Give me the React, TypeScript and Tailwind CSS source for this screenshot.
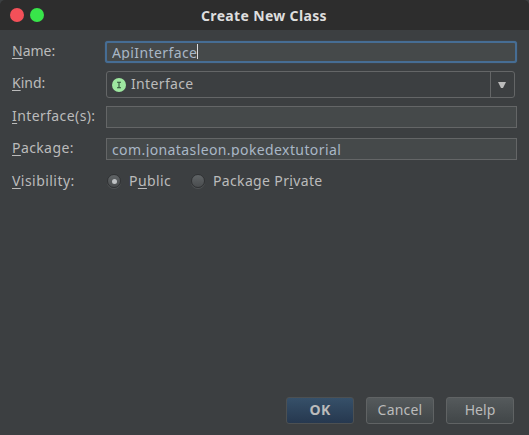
import type { ReactNode } from 'react';

function Key({ children }: { children: ReactNode }) {
  return <span className="underline decoration-1 underline-offset-2">{children}</span>;
}

function Row({ label, className, children }: { label: ReactNode; className: string; children: ReactNode }) {
  return (
    <div className={`flex ${className}`}>
      <div className="w-[94px] shrink-0 whitespace-nowrap leading-5">{label}</div>
      {children}
    </div>
  );
}

function Radio({ checked }: { checked?: boolean }) {
  return (
    <span className="flex size-[14px] items-center justify-center rounded-full border border-[#303234] bg-linear-to-b from-[#606466] to-[#4a4d4f] shadow-[0_1px_0_#505355]">
      {checked && <span className="size-[5px] rounded-full bg-[#bfc2c4]" />}
    </span>
  );
}

export default function App() {
  return (
    <div className="flex h-[435px] w-[529px] flex-col bg-[#3c3f41] font-['Noto_Sans',sans-serif] text-[14px] text-[#bbbbbb]">
      <header className="flex h-[30px] shrink-0 items-center rounded-t-[5px] bg-[#2d2d2d] px-[10px]">
        <div className="flex w-[191px] gap-[6px]">
          <span className="size-[14px] rounded-full bg-[#f45059]" />
          <span className="size-[14px] rounded-full bg-[#38e54a]" />
        </div>
        <h1 className="mt-px whitespace-nowrap text-[14px] font-bold leading-5 tracking-[0.34px] text-[#dedede]">Create New Class</h1>
      </header>

      <main className="flex grow flex-col pl-3">
        <Row className="mt-[10px] h-6" label={<div className="mt-px"><Key>N</Key>ame:</div>}>
          <div className="-ml-px mt-px h-[22px] w-[412px] rounded-[3px] border-2 border-[#466d94] bg-[#45494a] pl-[5px] shadow-[0_0_1px_#466d94]">
            <div className="flex h-[17px] items-start overflow-hidden whitespace-nowrap leading-[19px] tracking-[0.4px] text-[#a9b7c6]">
              <span>ApiInterface</span>
              <span className="mt-px h-[15px] w-px bg-[#dddddd]" />
            </div>
          </div>
        </Row>

        <Row className="mt-[7px] h-[27px]" label={<div className="mt-[2px]"><Key>K</Key>ind:</div>}>
          <div className="flex h-[27px] w-[409px] items-center rounded-[3px] border border-[#646667]">
            <span className="ml-[5px] flex size-[14px] items-center justify-center rounded-full bg-[#9ee8a0]">
              <svg viewBox="0 0 6 8" className="h-[8px] w-[6px]" fill="none" stroke="#31533a" strokeWidth="1.1">
                <path d="M1 1.2h4M3 1v6M1 6.8h4" />
              </svg>
            </span>
            <span className="-mt-[2px] ml-[5px] leading-5 tracking-[0.35px]">Interface</span>
            <div className="ml-auto flex h-full w-6 items-center justify-center border-l border-[#646667]">
              <svg viewBox="0 0 8 6" className="mr-px h-[6px] w-[8px]"><path d="M0 0h8L5 6H3z" fill="#bbbbbb" /></svg>
            </div>
          </div>
        </Row>

        <Row className="mt-2 h-[22px]" label={<span className="tracking-[0.4px]"><Key>I</Key>nterface(s):</span>}>
          <div className="h-[22px] w-[411px] border border-[#646667] bg-[#45494a]" />
        </Row>

        <Row className="mt-[10px] h-[22px]" label={<span className="tracking-[0.4px]"><Key>P</Key>ackage:</span>}>
          <div className="h-[22px] w-[411px] overflow-hidden border border-[#646667] bg-[#45494a] pl-[5px]">
            <div className="h-[18px] overflow-hidden whitespace-nowrap leading-[21px] tracking-[0.4px] text-[#a9b7c6]">com.jonatasleon.pokedextutorial</div>
          </div>
        </Row>

        <Row className="mt-[11px] h-5" label={<span className="tracking-[0.45px]"><Key>V</Key>isibility:</span>}>
          <div className="ml-px flex h-5 items-center">
            <Radio checked />
            <span className="ml-2 w-[62px] leading-5 tracking-[0.4px]">P<Key>u</Key>blic</span>
            <Radio />
            <span className="ml-2 whitespace-nowrap leading-5 tracking-[0.35px]">Package Pr<Key>i</Key>vate</span>
          </div>
        </Row>

        <footer className="mb-[11px] mr-[15px] mt-auto flex justify-end gap-3">
          <button className="flex h-[27px] w-[68px] items-center justify-center rounded-[3px] border border-[#4c5052] bg-linear-to-b from-[#365069] to-[#26384f] pb-[2px] font-bold tracking-[0.2px]">OK</button>
          <button className="flex h-[27px] w-[68px] items-center justify-center rounded-[3px] border border-[#606364] bg-linear-to-b from-[#555a5c] to-[#414648] pb-[2px] tracking-[0.2px]">Cancel</button>
          <button className="flex h-[27px] w-[68px] items-center justify-center rounded-[3px] border border-[#606364] bg-linear-to-b from-[#555a5c] to-[#414648] pb-[2px]">Help</button>
        </footer>
      </main>
    </div>
  );
}
